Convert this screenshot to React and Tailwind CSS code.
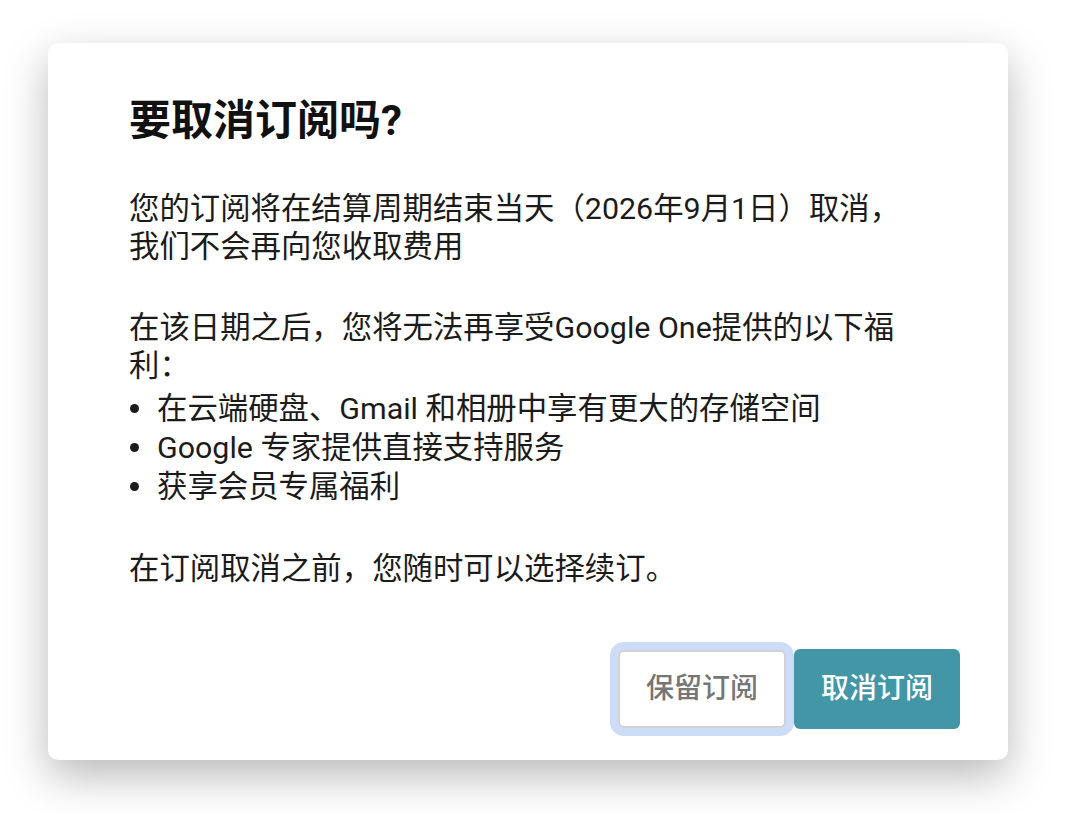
// App.jsx — 取消订阅确认对话框

const FONT = "font-['Roboto','Noto_Sans_CJK_SC',sans-serif]";

const perks = [
  "在云端硬盘、Gmail 和相册中享有更大的存储空间",
  "Google 专家提供直接支持服务",
  "获享会员专属福利",
];

function CancelDialog() {
  return (
    <div className="w-[960px] rounded-[10px] bg-white shadow-[0_16px_44px_rgba(0,0,0,0.28)] pt-[52px] pb-[31px] pl-[81px] pr-[48px]">
      <h2 className="text-[42px] leading-[52px] font-bold text-[#111]">要取消订阅吗?</h2>

      <div className="mt-[43px] w-[785px] text-[30.4px] leading-[37.5px] text-[#1b1b1b]">
        <p>您的订阅将在结算周期结束当天（2026年9月1日）取消，我们不会再向您收取费用</p>

        <p className="mt-[44px]">在该日期之后，您将无法再享受Google One提供的以下福利：</p>
        <ul className="mt-[5px]">
          {perks.map((p, i) => (
            <li key={i} className="flex items-center leading-[39px]">
              <span className="w-[28px] shrink-0">
                <span className="block w-[9px] h-[9px] rounded-full bg-[#1b1b1b] ml-[1px]" />
              </span>
              <span>{p}</span>
            </li>
          ))}
        </ul>

        <p className="mt-[44px]">在订阅取消之前，您随时可以选择续订。</p>
      </div>

      <div className="mt-[61px] flex items-center justify-end gap-2">
        <button className="w-[168px] h-[78px] rounded-[6px] border-2 border-[#d2d2d2] bg-white ring-8 ring-[#cddcf7] text-[28px] font-medium text-[#767676]">
          保留订阅
        </button>
        <button className="w-[166px] h-[80px] rounded-[6px] bg-[#4396a6] text-[28px] font-medium text-white">
          取消订阅
        </button>
      </div>
    </div>
  );
}

export default function App() {
  return (
    <div className={`${FONT} min-h-[814px] bg-white pt-[43px] pl-[48px]`}>
      <CancelDialog />
    </div>
  );
}
